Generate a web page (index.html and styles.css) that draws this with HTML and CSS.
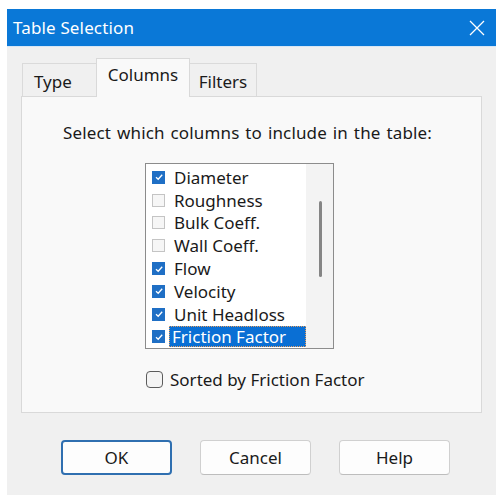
FILE: index.html
```html
<!DOCTYPE html>
<html>
<head>
<meta charset="utf-8">
<title>Table Selection</title>
<link rel="stylesheet" href="styles.css">
</head>
<body>
<div class="window">
  <div class="titlebar">
    <span class="title">Table Selection</span>
    <svg class="close" width="16" height="16" viewBox="0 0 16 16"><path d="M1 1 L15 15 M15 1 L1 15" stroke="#ffffff" stroke-width="1.3" fill="none"/></svg>
  </div>
  <div class="body">
    <div class="tabs">
      <div class="tab tab-type">Type</div>
      <div class="tab tab-active">Columns</div>
      <div class="tab tab-filters">Filters</div>
    </div>
    <div class="panel">
      <p class="prompt">Select which columns to include in the table:</p>
      <div class="listbox">
        <ul class="items">
          <li class="item"><span class="cb on"></span><span class="label">Diameter</span></li>
          <li class="item"><span class="cb"></span><span class="label">Roughness</span></li>
          <li class="item"><span class="cb"></span><span class="label">Bulk Coeff.</span></li>
          <li class="item"><span class="cb"></span><span class="label">Wall Coeff.</span></li>
          <li class="item"><span class="cb on"></span><span class="label">Flow</span></li>
          <li class="item"><span class="cb on"></span><span class="label">Velocity</span></li>
          <li class="item"><span class="cb on"></span><span class="label">Unit Headloss</span></li>
          <li class="item selected"><span class="cb on"></span><span class="label">Friction Factor</span></li>
        </ul>
        <div class="scrollbar"><div class="thumb"></div></div>
      </div>
      <label class="sorted"><span class="box"></span>Sorted by Friction Factor</label>
    </div>
    <div class="buttons">
      <button class="btn default">OK</button>
      <button class="btn">Cancel</button>
      <button class="btn">Help</button>
    </div>
  </div>
</div>
</body>
</html>
```
FILE: styles.css
```css
html, body {
  margin: 0;
  background: #ffffff;
}
body {
  padding: 9px 0 0 7px;
  font-family: "Noto Sans", "Open Sans", sans-serif;
  font-size: 17px;
  color: #1a1a1a;
}
.window {
  width: 489px;
  height: 486px;
  background: #f0f0f0;
  overflow: hidden;
}
.titlebar {
  height: 37px;
  background: #0a78d7;
  color: #ffffff;
  display: flex;
  align-items: center;
  justify-content: space-between;
  padding: 0 11px 0 6px;
  border-bottom: 1px solid #d6e6f5;
}
.title {
  font-size: 17px;
  letter-spacing: 0.15px;
}
.close {
  display: block;
}
.body {
  padding: 11px 14px 0 14px;
}
.tabs {
  display: flex;
  align-items: flex-end;
  height: 38px;
  position: relative;
  z-index: 1;
}
.tab {
  height: 33px;
  box-sizing: border-box;
  border: 1px solid #dadada;
  border-bottom: none;
  background: #f0f0f0;
  display: flex;
  align-items: center;
  justify-content: center;
  font-size: 17px;
}
.tab-type {
  width: 74px;
  margin-left: 1px;
  border-right: none;
  padding: 2px 0 0 11px;
  justify-content: flex-start;
}
.tab-active {
  width: 94px;
  height: 39px;
  margin-bottom: -1px;
  background: #f9f9f9;
  padding-bottom: 8px;
  border-color: #d9d9d9;
}
.tab-filters {
  width: 67px;
  border-left: none;
  padding-top: 2px;
}
.panel {
  height: 317px;
  box-sizing: border-box;
  border: 1px solid #d9d9d9;
  background: #f9f9f9;
  padding-top: 24px;
}
.prompt {
  margin: 0 0 19px 41px;
  line-height: 23px;
  letter-spacing: 0.15px;
  word-spacing: 1.3px;
  white-space: nowrap;
}
.listbox {
  width: 189px;
  height: 186px;
  box-sizing: border-box;
  margin-left: 123px;
  border: 1px solid #8c8c8c;
  background: #ffffff;
  display: flex;
}
.items {
  list-style: none;
  margin: 0;
  padding: 2px 0 0 0;
  flex: 1;
}
.item {
  height: 22.8px;
  display: flex;
  align-items: center;
  padding-left: 6px;
}
.cb {
  width: 13px;
  height: 13px;
  box-sizing: border-box;
  border: 1px solid #c4c4c4;
  background: #f6f6f6;
  margin-right: 7px;
  flex: none;
}
.cb.on {
  border: none;
  background: #1f6fc5 no-repeat center / 10px 10px url("data:image/svg+xml;utf8,<svg xmlns='http://www.w3.org/2000/svg' viewBox='0 0 10 10'><path d='M2 5.2 L4.2 7.3 L8.2 2.8' stroke='white' stroke-width='1.3' fill='none'/></svg>");
}
.label {
  line-height: 21px;
  padding: 0 2px;
  white-space: nowrap;
}
.selected .label {
  background: #0a6fd4;
  color: #ffffff;
  flex: 1;
  margin-left: -3px;
  padding-left: 3px;
  outline: 1px dotted #e8a060;
  outline-offset: -1px;
}
.scrollbar {
  width: 27px;
  flex: none;
  background: #f3f3f3;
  position: relative;
}
.thumb {
  position: absolute;
  left: 13px;
  top: 37px;
  width: 3px;
  height: 76px;
  background: #858585;
  border-radius: 2px;
}
.sorted {
  display: flex;
  align-items: center;
  margin: 19px 0 0 124px;
  line-height: 23px;
}
.box {
  width: 17px;
  height: 17px;
  box-sizing: border-box;
  border: 1px solid #5c5c5c;
  border-radius: 4px;
  background: #f4f4f4;
  margin-right: 7px;
}
.buttons {
  display: flex;
  gap: 28px;
  padding: 27px 0 0 40px;
}
.btn {
  width: 111px;
  height: 35px;
  box-sizing: border-box;
  border: 1px solid #d0d0d0;
  border-bottom-color: #bdbdbd;
  border-radius: 4px;
  background: #fdfdfd;
  font-family: inherit;
  font-size: 17px;
  color: #1a1a1a;
  padding: 0;
}
.btn.default {
  border: 2px solid #2f6fb0;
}
```
